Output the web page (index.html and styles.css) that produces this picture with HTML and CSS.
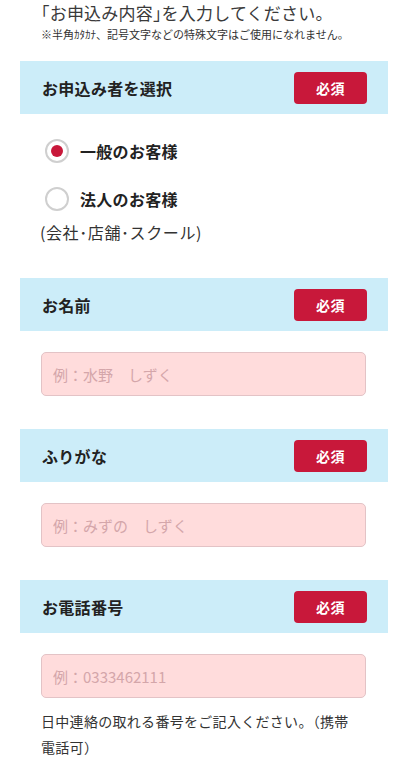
FILE: index.html
```html
<!DOCTYPE html>
<html lang="ja">
<head>
<meta charset="utf-8">
<title>お申込み内容</title>
<link rel="stylesheet" href="styles.css">
</head>
<body>
<div class="page">
  <div class="intro">
    <p class="title">「お申込み内容」を入力してください。</p>
    <p class="note">※半角ｶﾀｶﾅ、記号文字などの特殊文字はご使用になれません。</p>
  </div>

  <section class="field">
    <div class="field-head"><h2>お申込み者を選択</h2><span class="req">必須</span></div>
    <div class="field-body radios">
      <label class="radio"><input type="radio" name="type" checked><span class="dot"></span><span class="rlabel">一般のお客様</span></label>
      <label class="radio"><input type="radio" name="type"><span class="dot"></span><span class="rlabel">法人のお客様</span></label>
      <p class="sub">(会社･店舗･スクール)</p>
    </div>
  </section>

  <section class="field">
    <div class="field-head"><h2>お名前</h2><span class="req">必須</span></div>
    <div class="field-body">
      <input class="text" type="text" placeholder="例：水野　しずく">
    </div>
  </section>

  <section class="field">
    <div class="field-head"><h2>ふりがな</h2><span class="req">必須</span></div>
    <div class="field-body">
      <input class="text" type="text" placeholder="例：みずの　しずく">
    </div>
  </section>

  <section class="field">
    <div class="field-head"><h2>お電話番号</h2><span class="req">必須</span></div>
    <div class="field-body">
      <input class="text" type="tel" placeholder="例：0333462111">
      <p class="help">日中連絡の取れる番号をご記入ください。（携帯電話可）</p>
    </div>
  </section>
</div>
</body>
</html>
```

FILE: styles.css
```css
* { box-sizing: border-box; }
html, body { margin: 0; padding: 0; background: #fff; }
body {
  font-family: "Noto Sans CJK JP", "Noto Sans", sans-serif;
  color: #333;
  overflow: hidden;
}
.page { width: 408px; }

.intro { padding: 2px 20px 0 41px; height: 61px; }
.title {
  margin: 0;
  font-size: 17px;
  line-height: 22px;
  color: #3a3a3a;
  letter-spacing: 0.2px;
  font-feature-settings: "halt";
}
.note {
  margin: 3px 0 0;
  font-size: 11px;
  line-height: 14px;
  color: #333;
}

.field { margin: 0 20px 33px; }
.field-head {
  height: 53px;
  background: #ccedf9;
  display: flex;
  align-items: center;
  justify-content: space-between;
  padding: 0 21px 0 22px;
}
.field-head h2 {
  margin: 0;
  font-size: 16px;
  font-weight: 700;
  color: #222;
  letter-spacing: 0.3px;
}
.req {
  width: 73px;
  height: 32px;
  border-radius: 4px;
  background: #c8183a;
  color: #fff;
  font-size: 14px;
  font-weight: 700;
  display: flex;
  align-items: center;
  justify-content: center;
  letter-spacing: 0.5px;
}

.field-body { padding: 21px 21px 0; }
.radios { padding: 21px 0 0 25px; }
.radio {
  display: flex;
  align-items: center;
  height: 32px;
  margin-bottom: 16px;
}
.radio input { display: none; }
.dot {
  width: 24px;
  height: 24px;
  border-radius: 50%;
  border: 2px solid #cfcfcf;
  background: #fff;
  display: flex;
  align-items: center;
  justify-content: center;
  flex: none;
}
.radio input:checked + .dot::after {
  content: "";
  width: 12px;
  height: 12px;
  border-radius: 50%;
  background: #c8183a;
}
.rlabel {
  margin-left: 11px;
  font-size: 16px;
  font-weight: 700;
  color: #222;
  letter-spacing: 0.3px;
}
.sub {
  margin: -11px 0 0 -5px;
  font-size: 16px;
  line-height: 24px;
  color: #333;
  letter-spacing: 0.6px;
}
.field:first-of-type { margin-bottom: 34px; }

.text {
  display: block;
  width: 325px;
  height: 44px;
  border: 1px solid #e3c3c6;
  border-radius: 5px;
  background: #ffdcdc;
  padding: 0 11px;
  font-family: "Noto Sans CJK JP", "Noto Sans", sans-serif;
  font-size: 15px;
  color: #333;
  outline: none;
}
.text::placeholder { color: #d4a6aa; }

.help {
  margin: 10px 0 0;
  width: 320px;
  font-size: 14px;
  line-height: 26px;
  color: #333;
  letter-spacing: 0.3px;
}
```
